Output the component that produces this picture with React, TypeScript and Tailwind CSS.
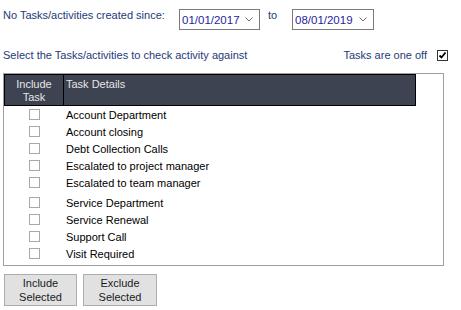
const tasks = [
  'Account Department',
  'Account closing',
  'Debt Collection Calls',
  'Escalated to project manager',
  'Escalated to team manager',
  'Service Department',
  'Service Renewal',
  'Support Call',
  'Visit Required',
]

const Chevron = () => (
  <svg width="8" height="5" viewBox="0 0 8 5" className="shrink-0">
    <path d="M0.5 0.5 L4 4 L7.5 0.5" fill="none" stroke="#6b6b6b" strokeWidth="1" />
  </svg>
)

const DateSelect = ({ value, width }: { value: string; width: string }) => (
  <div
    className={`${width} h-[21px] mt-[1px] border border-[#7a7a7a] bg-white flex items-center justify-between pl-[2px] pr-[6px] text-[11.5px] text-[#1f1f9e]`}
  >
    <span>{value}</span>
    <Chevron />
  </div>
)

const Box = () => <div className="w-[11px] h-[11px] border border-[#a8a8a8] bg-white" />

export default function App() {
  return (
    <div
      className="w-[461px] h-[310px] bg-white pl-[3px] text-[11px] leading-[14px]"
      style={{ fontFamily: '"Liberation Sans", Arial, sans-serif' }}
    >
      {/* Date range */}
      <div className="flex items-start pt-[8px]">
        <div className="w-[176px] text-[#1d3a78]">No Tasks/activities created since:</div>
        <DateSelect value="01/01/2017" width="w-[81px]" />
        <div className="w-[32px] pl-[8px] text-[#1d3a78]">to</div>
        <DateSelect value="08/01/2019" width="w-[82px]" />
      </div>

      {/* Options line */}
      <div className="flex items-center justify-between w-[445px] mt-[18px] text-[#1d3a78]">
        <span>Select the Tasks/activities to check activity against</span>
        <div className="flex items-center gap-[10px]">
          <span>Tasks are one off</span>
          <div className="w-[11px] h-[11px] border border-[#333] bg-white flex items-center justify-center">
            <svg width="9" height="9" viewBox="0 0 9 9">
              <path d="M1.5 4.5 L3.5 6.5 L7.5 1.5" fill="none" stroke="#000" strokeWidth="1.8" />
            </svg>
          </div>
        </div>
      </div>

      {/* Task table */}
      <div className="w-[441px] h-[193px] mt-[11px] border border-[#a0a0a0]">
        <div className="flex w-[412px] h-[32px] bg-[#3d4350] border border-black text-[#e6e6e6]">
          <div className="w-[59px] border-r border-black text-center pt-[3px] leading-[13px]">
            Include
            <br />
            Task
          </div>
          <div className="pl-[2px] pt-[3px] leading-[13px]">Task Details</div>
        </div>
        <div className="flex flex-col">
          {tasks.map((t, i) => (
            <div key={t} className={`flex items-center h-[17px] ${i === 5 ? 'mt-[3px]' : ''}`}>
              <div className="w-[60px] flex justify-center">
                <Box />
              </div>
              <span className="pl-[2px] text-black">{t}</span>
            </div>
          ))}
        </div>
      </div>

      {/* Buttons */}
      <div className="flex gap-[6px] mt-[8px] pl-[1px]">
        <button className="w-[73px] h-[32px] bg-[#e1e1e1] border border-[#adadad] text-[#1a1a1a] leading-[14px]">
          Include
          <br />
          Selected
        </button>
        <button className="w-[74px] h-[32px] bg-[#e1e1e1] border border-[#adadad] text-[#1a1a1a] leading-[14px]">
          Exclude
          <br />
          Selected
        </button>
      </div>
    </div>
  )
}
